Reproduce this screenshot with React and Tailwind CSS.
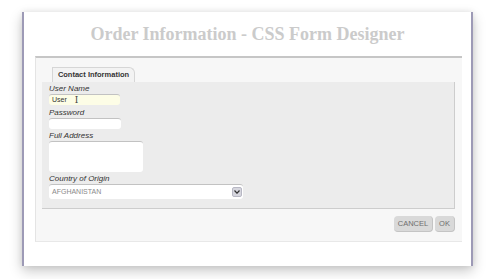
import React from 'react';

function Field({ label, children, className = '' }) {
    return (
        <div className={className}>
            <div className='h-[10px] text-[8px] leading-[10px] italic text-[#333]'>{label}</div>
            {children}
        </div>
    );
}

function SelectArrow() {
    return (
        <div className='w-[10px] h-[10px] rounded-[2px] bg-[#d6d6de] border border-[#b8b8c4] flex items-center justify-center'>
            <svg width='6' height='4' viewBox='0 0 6 4'>
                <path d='M0.5 0.5 L3 3.2 L5.5 0.5' fill='none' stroke='#333' strokeWidth='1.2' />
            </svg>
        </div>
    );
}

export default function App() {
    return (
        <div className='w-[495px] h-[279px] bg-white pl-[22px] pt-[12px]' style={{ fontFamily: '"Liberation Sans", Arial, sans-serif' }}>
            <div className='w-[451px] h-[254px] bg-white border-x-2 border-[#9d9ab6] shadow-[0_5px_12px_rgba(0,0,0,0.22),0_0_6px_rgba(0,0,0,0.08)] flex flex-col'>
                <div className='h-[44px] flex items-center justify-center pt-[1px]'>
                    <h1 className='text-[18px] font-bold text-[#cbcbcb]' style={{ fontFamily: '"Liberation Serif", "Times New Roman", serif' }}>
                        Order Information - CSS Form Designer
                    </h1>
                </div>
                <div className='ml-[11px] mr-[9px] h-[186px] bg-[#f7f7f7] border-t-2 border-[#c6c6c6] border-l border-l-[#e4e4e4] border-b border-b-[#e8e8e8] pl-[6px] pr-[7px] flex flex-col'>
                    <div className='pl-[10px] pt-[9px] flex'>
                        <div className='h-[15px] w-[83px] bg-[#f3f3f3] border-t border-r border-l border-[#d6d6d6] rounded-tr-[6px] flex items-center justify-center text-[7.5px] font-bold text-[#333]'>
                            Contact Information
                        </div>
                    </div>
                    <div className='h-[127px] bg-[#ececec] border-r border-b border-[#cdcdcd] pl-[7px] pt-[2px]'>
                        <Field label='User Name'>
                            <div className='w-[71px] h-[11px] bg-[#fdfde6] rounded-[3px] border-t border-[#c2c2c2] flex items-center pl-[3px] text-[7px] text-[#333]'>
                                User
                                <span className='ml-[8px] text-[9px] leading-none text-[#444]' style={{ fontFamily: '"DejaVu Serif", serif' }}>I</span>
                            </div>
                        </Field>
                        <Field label='Password' className='mt-[3px]'>
                            <div className='w-[72px] h-[11px] bg-white rounded-[3px] border-t border-[#c2c2c2]' />
                        </Field>
                        <Field label='Full Address' className='mt-[2px]'>
                            <div className='w-[94px] h-[31px] bg-white rounded-[3px] border-t border-[#c2c2c2]' />
                        </Field>
                        <Field label='Country of Origin' className='mt-[2px]'>
                            <div className='w-[194px] h-[15px] bg-white rounded-[3px] border-t border-[#c2c2c2] flex items-center justify-between pl-[3px] pr-[1px] text-[7px] text-[#8a8a8a]'>
                                AFGHANISTAN
                                <SelectArrow />
                            </div>
                        </Field>
                    </div>
                    <div className='mt-[7px] flex justify-end gap-[2px]'>
                        <button className='w-[39px] h-[16px] rounded-[4px] bg-[#d9d9d9] border-b border-r border-[#c4c4c4] text-[7.5px] text-[#6e6e6e]'>CANCEL</button>
                        <button className='w-[20px] h-[16px] rounded-[4px] bg-[#d9d9d9] border-b border-r border-[#c4c4c4] text-[7.5px] text-[#6e6e6e]'>OK</button>
                    </div>
                </div>
            </div>
        </div>
    );
}
